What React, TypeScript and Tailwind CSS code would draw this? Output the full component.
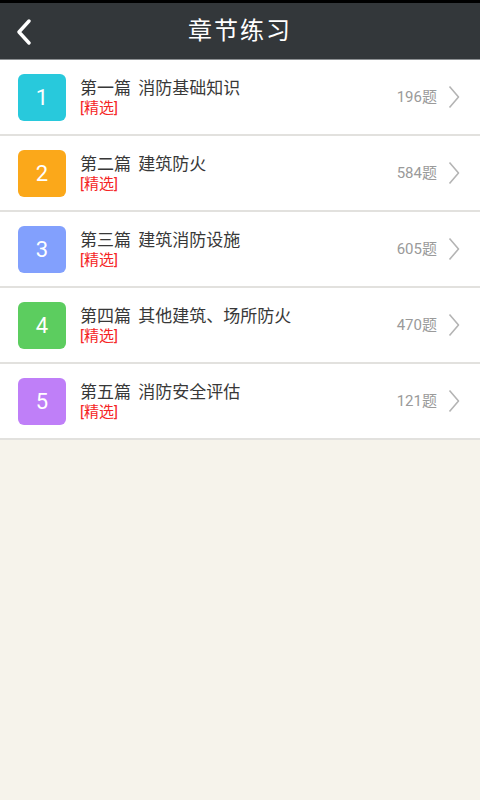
const chapters = [
  { n: 1, title: "第一篇 消防基础知识", count: 196, color: "bg-[#28c9dc]" },
  { n: 2, title: "第二篇 建筑防火", count: 584, color: "bg-[#fba81a]" },
  { n: 3, title: "第三篇 建筑消防设施", count: 605, color: "bg-[#82a0fd]" },
  { n: 4, title: "第四篇 其他建筑、场所防火", count: 470, color: "bg-[#5ccd5f]" },
  { n: 5, title: "第五篇 消防安全评估", count: 121, color: "bg-[#bf7ff8]" },
];

function Chevron() {
  return (
    <svg width="12" height="24" viewBox="0 0 12 24" fill="none">
      <path d="M1.5 1.5 L10.5 12 L1.5 22.5" stroke="#b4b4b4" strokeWidth="1.6" strokeLinejoin="round" />
    </svg>
  );
}

export default function App() {
  return (
    <div
      className="flex min-h-[800px] w-[480px] flex-col bg-[#f6f3eb]"
      style={{ fontFamily: "Roboto, 'Noto Sans CJK SC', sans-serif" }}
    >
      <div className="h-[3px] bg-black" />
      {/* ── Header ── */}
      <div className="relative flex h-[57px] items-center justify-center border-b border-[#8d9093] bg-[#33373a]">
        <button className="absolute left-[14px] top-[16px] p-0">
          <svg width="20" height="26" viewBox="0 0 20 26" fill="none">
            <path d="M15 2 L5 13 L15 24" stroke="#ffffff" strokeWidth="3.4" strokeLinecap="round" strokeLinejoin="round" />
          </svg>
        </button>
        <span className="text-[24px] tracking-[2px] text-white">章节练习</span>
      </div>

      {/* ── Chapter list ── */}
      <ul className="flex list-none flex-col">
        {chapters.map((c) => (
          <li
            key={c.n}
            className="flex h-[76px] items-center border-b-2 border-[#e2e1de] bg-white pl-[18px] pr-[20px]"
          >
            <div
              className={`flex h-[47px] w-[48px] shrink-0 items-center justify-center rounded-[6px] ${c.color} text-[22px] text-white`}
            >
              {c.n}
            </div>
            <div className="ml-[14px] flex flex-1 flex-col pt-[2px] leading-none">
              <span className="text-[17px] text-[#383838] [word-spacing:3px]">{c.title}</span>
              <span className="mt-[4px] text-[15px] text-[#f52525]">[精选]</span>
            </div>
            <span className="mr-[11px] text-[15px] text-[#9a9a9a]">{c.count}题</span>
            <Chevron />
          </li>
        ))}
      </ul>
    </div>
  );
}
